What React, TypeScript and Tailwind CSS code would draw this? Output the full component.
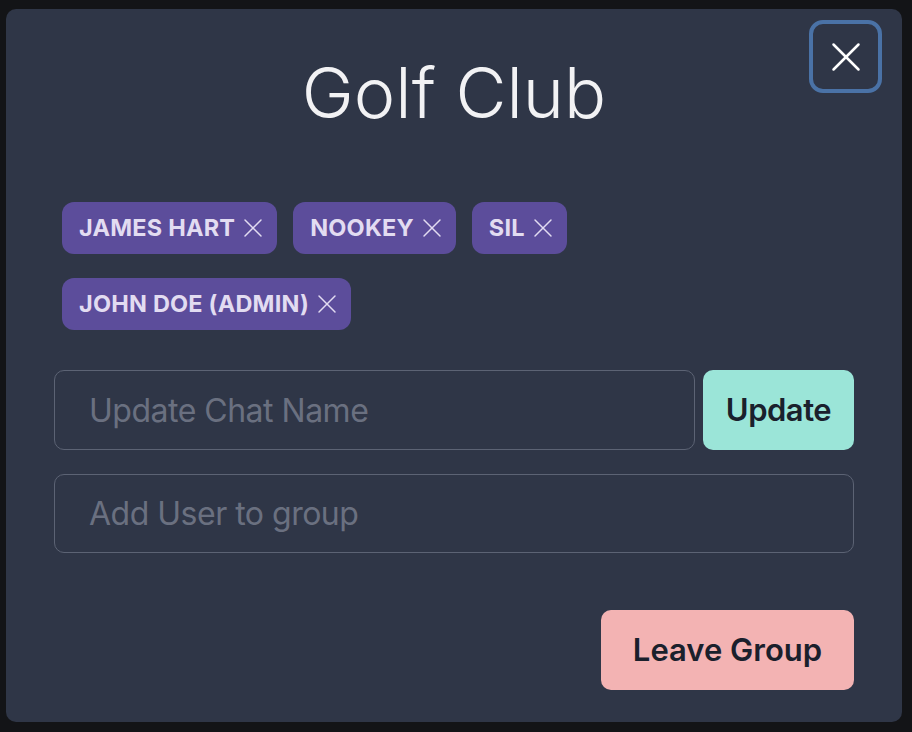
import { X } from "lucide-react";

const members = ["James Hart", "Nookey", "Sil", "John Doe (Admin)"];

function Tag({ label }: { label: string }) {
  return (
    <span className="flex h-[52px] items-center gap-[2px] rounded-[12px] bg-[#5c4d9b] pl-[17px] pr-[8px] text-[23.5px] font-bold uppercase tracking-[0.2px] text-[#e2dcf1]">
      {label}
      <X size={32} strokeWidth={1.1} />
    </span>
  );
}

export default function App() {
  return (
    <div
      className="h-[732px] w-full bg-[#131417] pl-[6px] pr-[10px] pt-[9px]"
      style={{ fontFamily: "Inter, 'Noto Sans', sans-serif" }}
    >
      <div className="relative h-[713px] rounded-[10px] bg-[#2f3647] px-[48px]">
        <button className="absolute right-[20px] top-[11px] flex h-[73px] w-[73px] items-center justify-center rounded-[14px] border-[4px] border-[#4a72a6] text-white">
          <X size={50} strokeWidth={1.2} />
        </button>

        <h1 className="pt-[42px] text-center text-[70px] font-light leading-[84px] text-[#f2f2f4]">
          Golf Club
        </h1>

        <div className="mt-[67px] flex flex-wrap gap-x-[16px] gap-y-[24px] px-[8px]">
          {members.map((m) => (
            <Tag key={m} label={m} />
          ))}
        </div>

        <div className="mt-[40px] flex gap-[8px]">
          <input
            placeholder="Update Chat Name"
            className="h-[80px] flex-1 rounded-[10px] border-[1.5px] border-[#5c6374] bg-transparent px-[34px] text-[32px] tracking-[-0.5px] text-white outline-none placeholder:text-[#6a7080]"
          />
          <button className="h-[80px] w-[151px] rounded-[10px] bg-[#9be5d8] text-[31px] font-semibold tracking-[-0.5px] text-[#1a202c]">
            Update
          </button>
        </div>

        <input
          placeholder="Add User to group"
          className="mt-[24px] block h-[79px] w-full rounded-[10px] border-[1.5px] border-[#5c6374] bg-transparent px-[34px] text-[32px] tracking-[-0.5px] text-white outline-none placeholder:text-[#6a7080]"
        />

        <div className="mt-[57px] flex justify-end">
          <button className="h-[80px] w-[253px] rounded-[10px] bg-[#f3b3b3] text-[31px] font-semibold text-[#1a202c]">
            Leave Group
          </button>
        </div>
      </div>
    </div>
  );
}
